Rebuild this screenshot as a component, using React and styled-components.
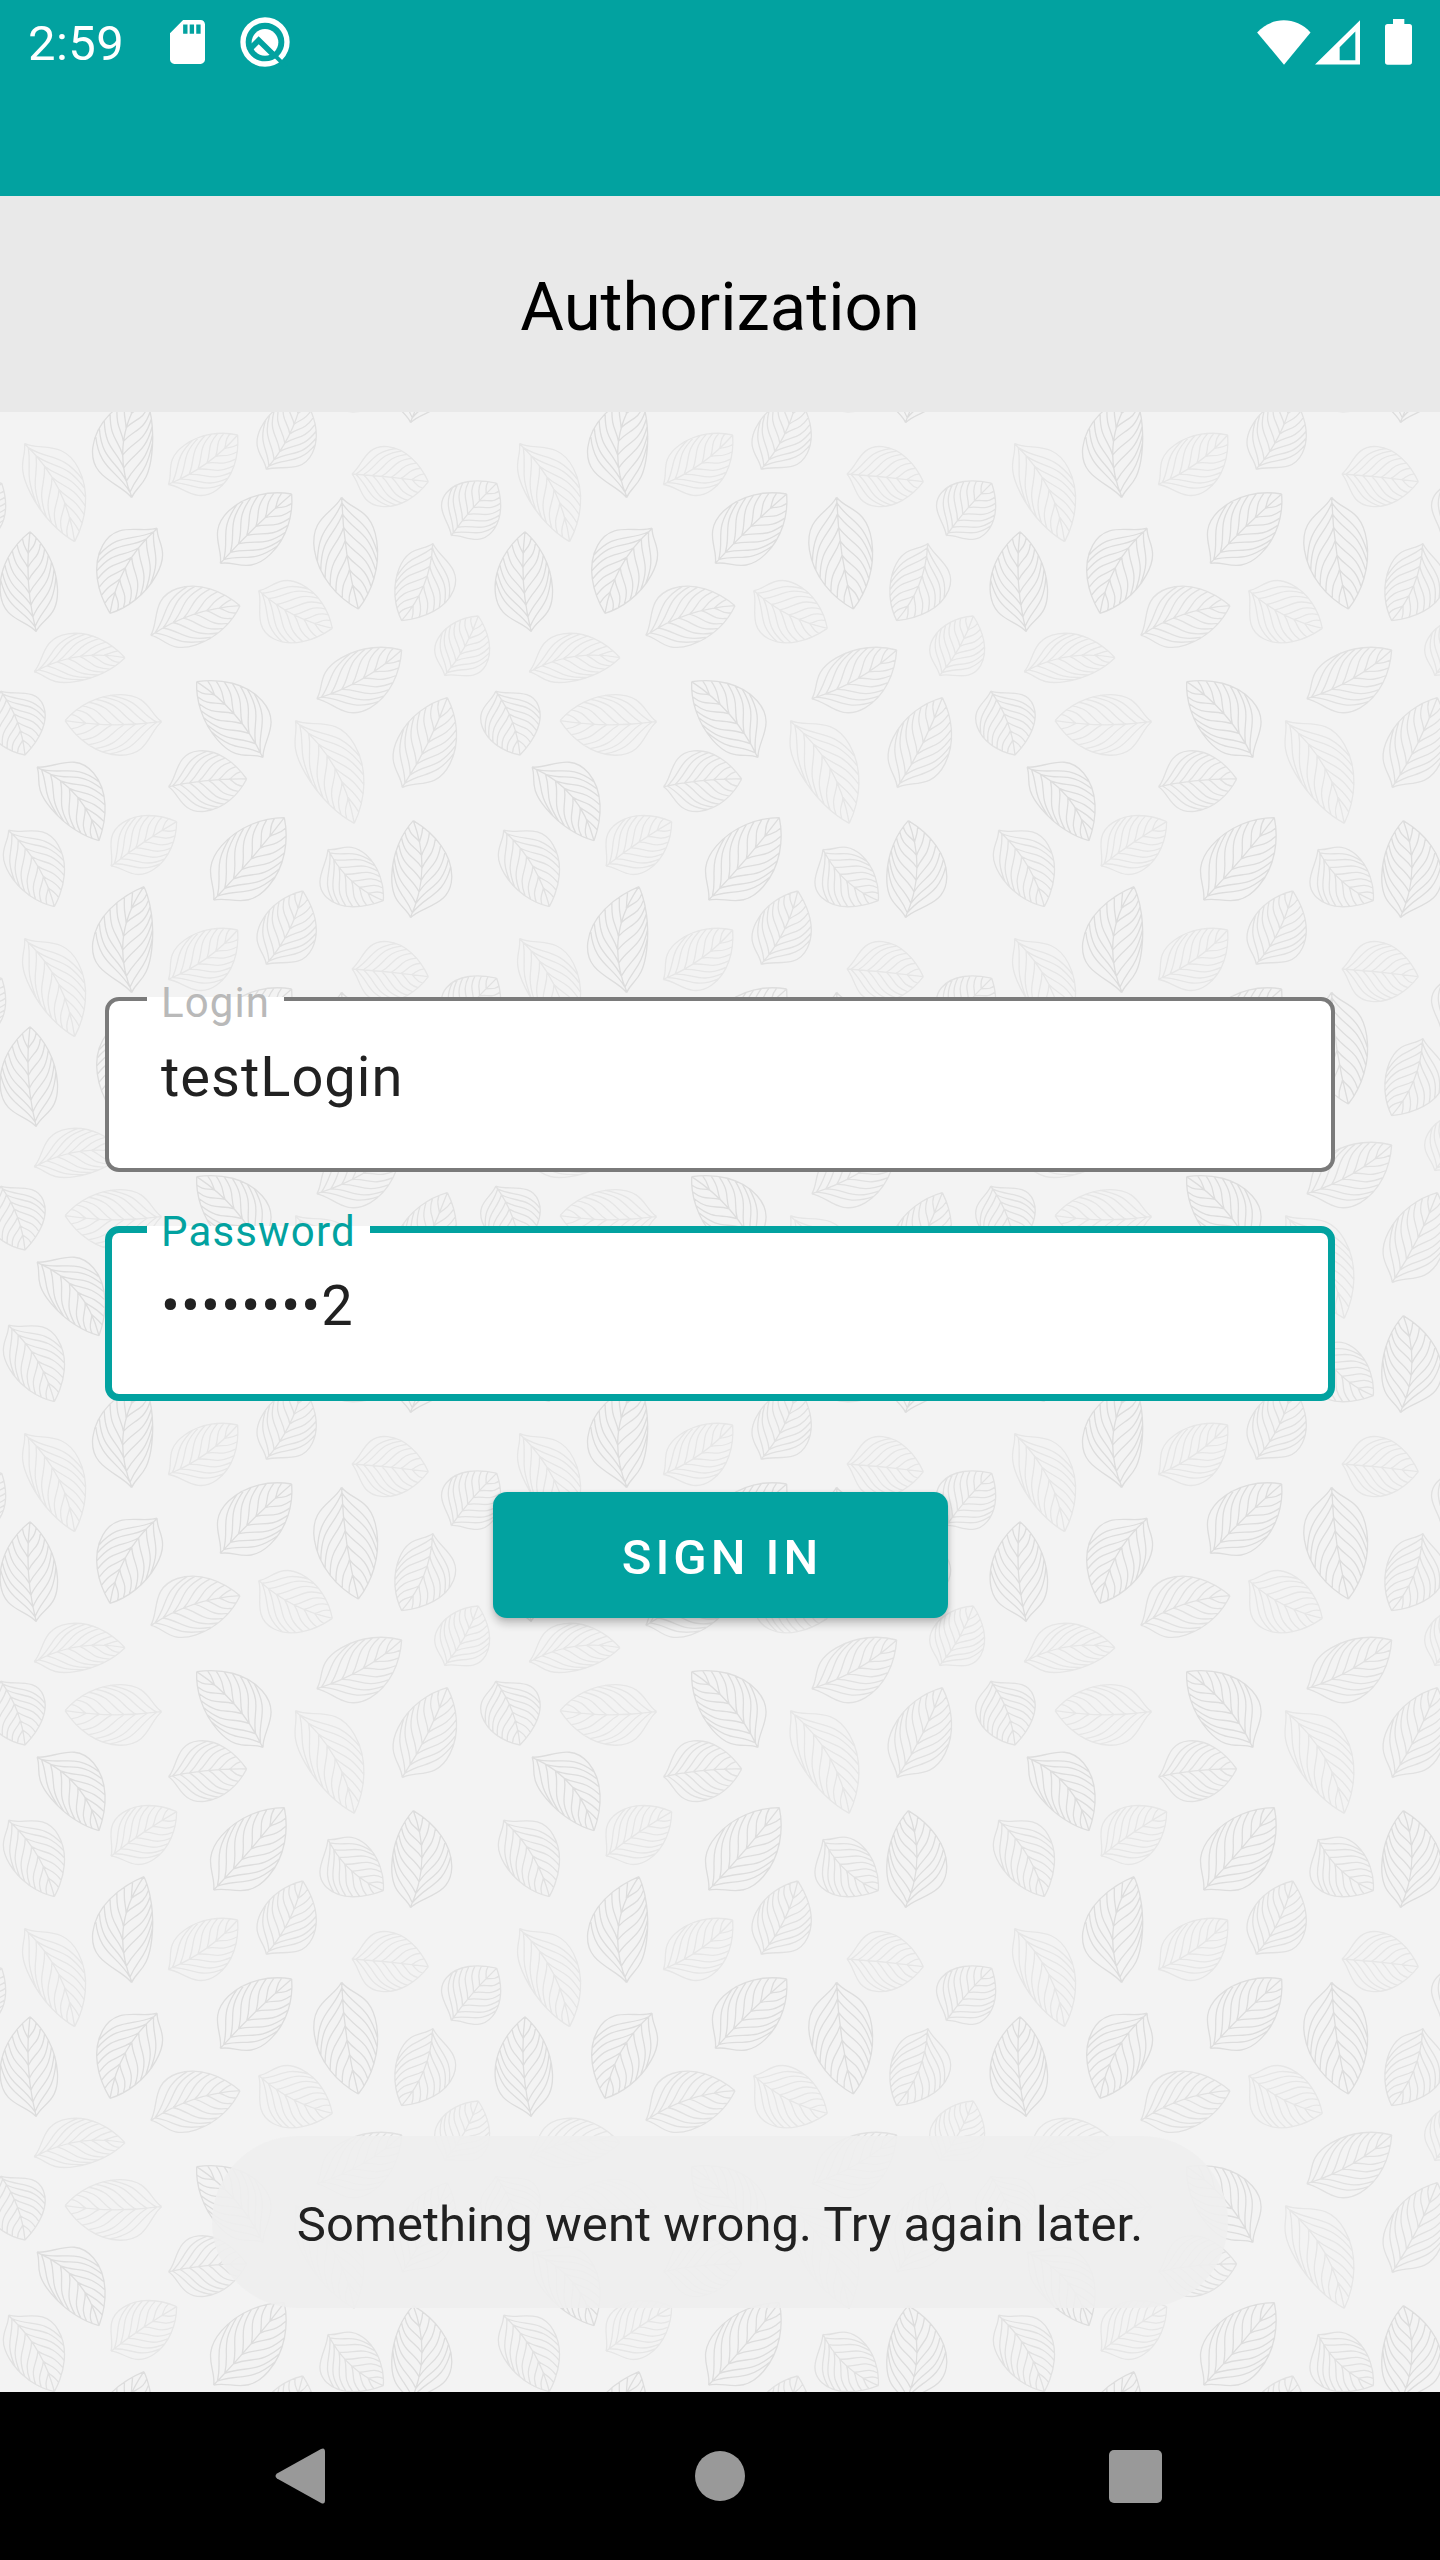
import React from 'react';
import styled, { createGlobalStyle } from 'styled-components';

const TEAL = '#02a2a0';

const GlobalStyle = createGlobalStyle`
  * { box-sizing: border-box; }
  body { margin: 0; background: #f3f3f3; font-family: Roboto, "Noto Sans", sans-serif; }
`;

const Screen = styled.div`
  width: 1440px;
  height: 2560px;
  display: flex;
  flex-direction: column;
  overflow: hidden;
`;

const StatusBar = styled.header`
  height: 196px;
  flex: none;
  display: flex;
  justify-content: space-between;
  align-items: flex-start;
  padding: 0 28px;
  background: ${TEAL};
  color: #fff;
`;

const StatusGroup = styled.div`
  display: flex;
  align-items: center;
  height: 84px;
`;

const Clock = styled.span`
  width: 142px;
  padding-top: 4px;
  font-size: 49px;
  line-height: 84px;
  letter-spacing: 0.4px;
`;

const StatusIcon = styled.svg`
  display: block;
  flex: none;
  margin-left: ${(p) => p.$gap || 0}px;
`;

const TitleBar = styled.div`
  height: 216px;
  flex: none;
  display: flex;
  align-items: center;
  justify-content: center;
  padding-top: 5px;
  background: #e9e9e9;
`;

const Title = styled.h1`
  margin: 0;
  font-size: 67px;
  font-weight: 400;
  color: #000;
  white-space: nowrap;
`;

const Main = styled.main`
  height: 1980px;
  flex: none;
  display: grid;
  grid-template: 1980px / 1440px;
  background: #f3f3f3;
`;

const LeafBackdrop = styled.svg`
  grid-area: 1 / 1;
  display: block;
`;

const Form = styled.form`
  grid-area: 1 / 1;
  z-index: 1;
  display: flex;
  flex-direction: column;
  align-items: center;
  padding: 585px 105px 0;
`;

const Field = styled.div`
  position: relative;
  width: 100%;
  height: 175px;
  margin-bottom: ${(p) => p.$after}px;
  padding: ${(p) => 60 - p.$line}px 0 0 ${(p) => 56 - p.$line}px;
  border: ${(p) => p.$line}px solid ${(p) => p.$color};
  border-radius: 14px;
  background: #fff;
`;

const Label = styled.label`
  position: absolute;
  left: ${(p) => 42 - p.$line}px;
  top: ${(p) => -19 - p.$line}px;
  width: ${(p) => p.$width}px;
  padding-left: 14px;
  font-size: 42px;
  line-height: 50px;
  letter-spacing: ${(p) => p.$spacing}px;
  white-space: nowrap;
  color: ${(p) => p.$color};
  background: linear-gradient(#fff, #fff) no-repeat 0 19px / 100% 8px;
`;

const Value = styled.div`
  font-size: 56px;
  line-height: 40px;
  letter-spacing: ${(p) => p.$spacing}px;
  white-space: nowrap;
  color: #212121;
`;

const SignIn = styled.button`
  width: 455px;
  height: 126px;
  padding: 4px 0 0 4px;
  border: 0;
  border-radius: 14px;
  background: ${TEAL};
  box-shadow: 0 6px 8px rgba(0, 0, 0, 0.2), 0 1px 5px rgba(0, 0, 0, 0.1);
  color: #fff;
  font: 500 49px Roboto, sans-serif;
  letter-spacing: 4px;
`;

const Toast = styled.div`
  grid-area: 1 / 1;
  z-index: 2;
  align-self: end;
  justify-self: center;
  display: flex;
  align-items: center;
  justify-content: center;
  width: 1016px;
  height: 172px;
  margin-bottom: 84px;
  padding-top: 4px;
  border-radius: 86px;
  background: rgba(238, 238, 238, 0.9);
  color: #212121;
  font-size: 49px;
  white-space: nowrap;
  letter-spacing: 0.06px;
`;

const NavBar = styled.nav`
  height: 168px;
  flex: none;
  display: flex;
  align-items: center;
  justify-content: space-between;
  padding: 0 278px 0 275px;
  background: #000;
`;

const NavIcon = styled.svg`
  display: block;
  margin-left: ${(p) => p.$nudge || 0}px;
`;

/* Leaf: stem x/y, apex x/y, left width, right width, tone. Units are thirds of a pixel. */
const LEAVES = [
  [108, 692, 90, 395, 100, 72, 2],
  [75, 133, 224, 425, 110, 52, 0],
  [395, 290, 432, -25, 133, 45, 2],
  [507, 252, 713, 105, 68, 98, 0],
  [800, 206, 908, -12, 70, 102, 1],
  [1058, 222, 1285, 245, 92, 88, 0],
  [1355, 405, 1490, 250, 95, 85, 1],
  [663, 488, 875, 282, 95, 85, 2],
  [1025, 295, 1075, 627, 85, 104, 2],
  [470, 387, 330, 640, 66, 118, 2],
  [1298, 433, 1205, 662, 110, 66, 1],
  [455, 705, 720, 617, 108, 70, 1],
  [778, 573, 997, 685, 75, 108, 0],
  [105, 815, 375, 773, 97, 48, 0],
  [1335, 825, 1435, 648, 72, 92, 0],
  [953, 895, 1205, 750, 70, 103, 1],
  [787, 1070, 590, 845, 68, 110, 2],
  [1488, 875, 1560, 1065, 104, 76, 1],
  [482, 965, 195, 962, 102, 80, 0],
  [113, 1103, 297, 1322, 118, 48, 2],
  [508, 1160, 740, 1137, 98, 84, 1],
  [888, 965, 1063, 1270, 118, 53, 0],
  [1208, 1160, 1342, 893, 78, 96, 1],
  [335, 1397, 530, 1265, 88, 80, 0],
  [27, 1293, 163, 1520, 105, 65, 1],
  [643, 1498, 853, 1253, 88, 98, 2],
  [985, 1350, 1150, 1502, 66, 108, 1],
  [1232, 1550, 1240, 1262, 60, 120, 2],
];

const TONES = ['#e6e6e6', '#e1e1e1', '#dddddd'];

const VEIN_STARTS = [0.04, 0.14, 0.26, 0.38, 0.51, 0.64, 0.78];

const cubic = (a, b, c, d, u) => {
  const v = 1 - u;
  return v * v * v * a + 3 * v * v * u * b + 3 * v * u * u * c + u * u * u * d;
};

/* Point on the outer part of one leaf half, as [distance along, share of the width]. */
const edgeAt = (u) => [cubic(0.42, 0.66, 0.87, 1, u), cubic(1, 1, 0.55, 0, u)];

function leafPath([sx, sy, ax, ay, left, right]) {
  const len = Math.hypot(ax - sx, ay - sy);
  const ux = (ax - sx) / len;
  const uy = (ay - sy) / len;
  const bow = (right - left) * 0.5;
  const rib = (t) => bow * 4 * t * (1 - t);
  const at = (t, w) =>
    `${(sx + ux * t * len - uy * w).toFixed(1)} ${(sy + uy * t * len + ux * w).toFixed(1)}`;
  const parts = [`M${at(0, 0)}C${at(0.33, bow * 1.33)} ${at(0.66, bow * 1.33)} ${at(1, 0)}`];
  [-left, right].forEach((w) => {
    parts.push(
      `M${at(-0.01, 0)}C${at(0.12, w * 0.28)} ${at(0.12, w)} ${at(0.42, w)}` +
        `C${at(0.66, w)} ${at(0.87, w * 0.55)} ${at(1, 0)}`
    );
    VEIN_STARTS.forEach((s, i) => {
      const [e, share] = edgeAt(0.16 + i * 0.115);
      const m = rib(s);
      const y = w * share;
      const d = e - s;
      parts.push(
        `M${at(s, m)}C${at(s + d * 0.4, m + (y - m) * 0.38)} ${at(s + d * 0.36, m + (y - m) * 0.82)} ${at(e, y)}`
      );
    });
  });
  return parts.join('');
}

const SHIFTS = [-1485, 0, 1485];

function Leaves() {
  return (
    <LeafBackdrop width="1440" height="1980" aria-hidden="true">
      <defs>
        <g id="leaves" fill="none" strokeWidth="4" strokeLinejoin="round">
          {LEAVES.map((leaf) => (
            <path key={leaf.join()} d={leafPath(leaf)} stroke={TONES[leaf[6]]} />
          ))}
        </g>
        <pattern id="tile" width="1485" height="1485" patternUnits="userSpaceOnUse" patternTransform="translate(0 -12) scale(0.33333)">
          {SHIFTS.map((x) => SHIFTS.map((y) => <use key={`${x},${y}`} href="#leaves" x={x} y={y} />))}
        </pattern>
      </defs>
      <rect width="1440" height="1980" fill="url(#tile)" />
    </LeafBackdrop>
  );
}

export default function App() {
  return (
    <Screen>
      <GlobalStyle />
      <StatusBar>
        <StatusGroup>
          <Clock>2:59</Clock>
          <StatusIcon width="35" height="44" viewBox="4 2 16 20" preserveAspectRatio="none" fill="#fff">
            <path d="M18 2h-8L4 8v12c0 1.1.9 2 2 2h12c1.100 0 2-.9 2-2V4c0-1.100-.9-2-2-2zm-6 6.200h-2V4h2zm3 0h-2V4h2zm3 0h-2V4h2z" />
          </StatusIcon>
          <StatusIcon $gap={35} width="50" height="50" viewBox="718 51 150 150">
            <circle cx="793" cy="126" r="66" fill="none" stroke="#fff" strokeWidth="16" />
            <circle cx="793" cy="127" r="40" fill="#fff" />
            <path d="M744 151L774 121L816 162" fill="none" stroke={TEAL} strokeWidth="17" />
            <path d="M810 154L856 200" fill="none" stroke={TEAL} strokeWidth="12" />
          </StatusIcon>
        </StatusGroup>
        <StatusGroup>
          <StatusIcon width="54" height="45" viewBox="114 57 160 134" fill="#fff">
            <path d="M114 94C158 46 229 46 273 94L194 190z" />
          </StatusIcon>
          <StatusIcon $gap={4} width="45" height="45" viewBox="285 58 135 134" fill="#fff">
            <path fillRule="evenodd" d="M420 58V191H285zM406 92L359 139V178H406z" />
          </StatusIcon>
          <StatusIcon $gap={25} width="27" height="46" viewBox="495 57 81 138" fill="#fff">
            <path d="M519 57h34v15h15q8 0 8 8v106q0 8-8 8h-65q-8 0-8-8V80q0-8 8-8h16z" />
          </StatusIcon>
        </StatusGroup>
      </StatusBar>
      <TitleBar>
        <Title>Authorization</Title>
      </TitleBar>
      <Main>
        <Leaves />
        <Form>
          <Field $line={4} $color="#7a7a7a" $after={54}>
            <Label $line={4} $width={137} $spacing={1.1} $color="#b9b9b9">Login</Label>
            <Value $spacing={1}>testLogin</Value>
          </Field>
          <Field $line={7} $color={TEAL} $after={91}>
            <Label $line={7} $width={223} $spacing={1.15} $color={TEAL}>Password</Label>
            <Value $spacing={1.15}>••••••••2</Value>
          </Field>
          <SignIn type="button">SIGN IN</SignIn>
        </Form>
        <Toast>Something went wrong. Try again later.</Toast>
      </Main>
      <NavBar>
        <NavIcon width="51" height="56" viewBox="0 0 51 56" fill="#999">
          <path d="M2 25.500L46 1Q50 -1 50 4V52Q50 57 46 55L2 30.500Q-1 28 2 25.500z" />
        </NavIcon>
        <NavIcon $nudge={5} width="50" height="50" viewBox="0 0 50 50" fill="#999">
          <circle cx="25" cy="25" r="25" />
        </NavIcon>
        <NavIcon width="53" height="53" viewBox="0 0 53 53" fill="#999">
          <rect width="53" height="53" rx="5" />
        </NavIcon>
      </NavBar>
    </Screen>
  );
}
